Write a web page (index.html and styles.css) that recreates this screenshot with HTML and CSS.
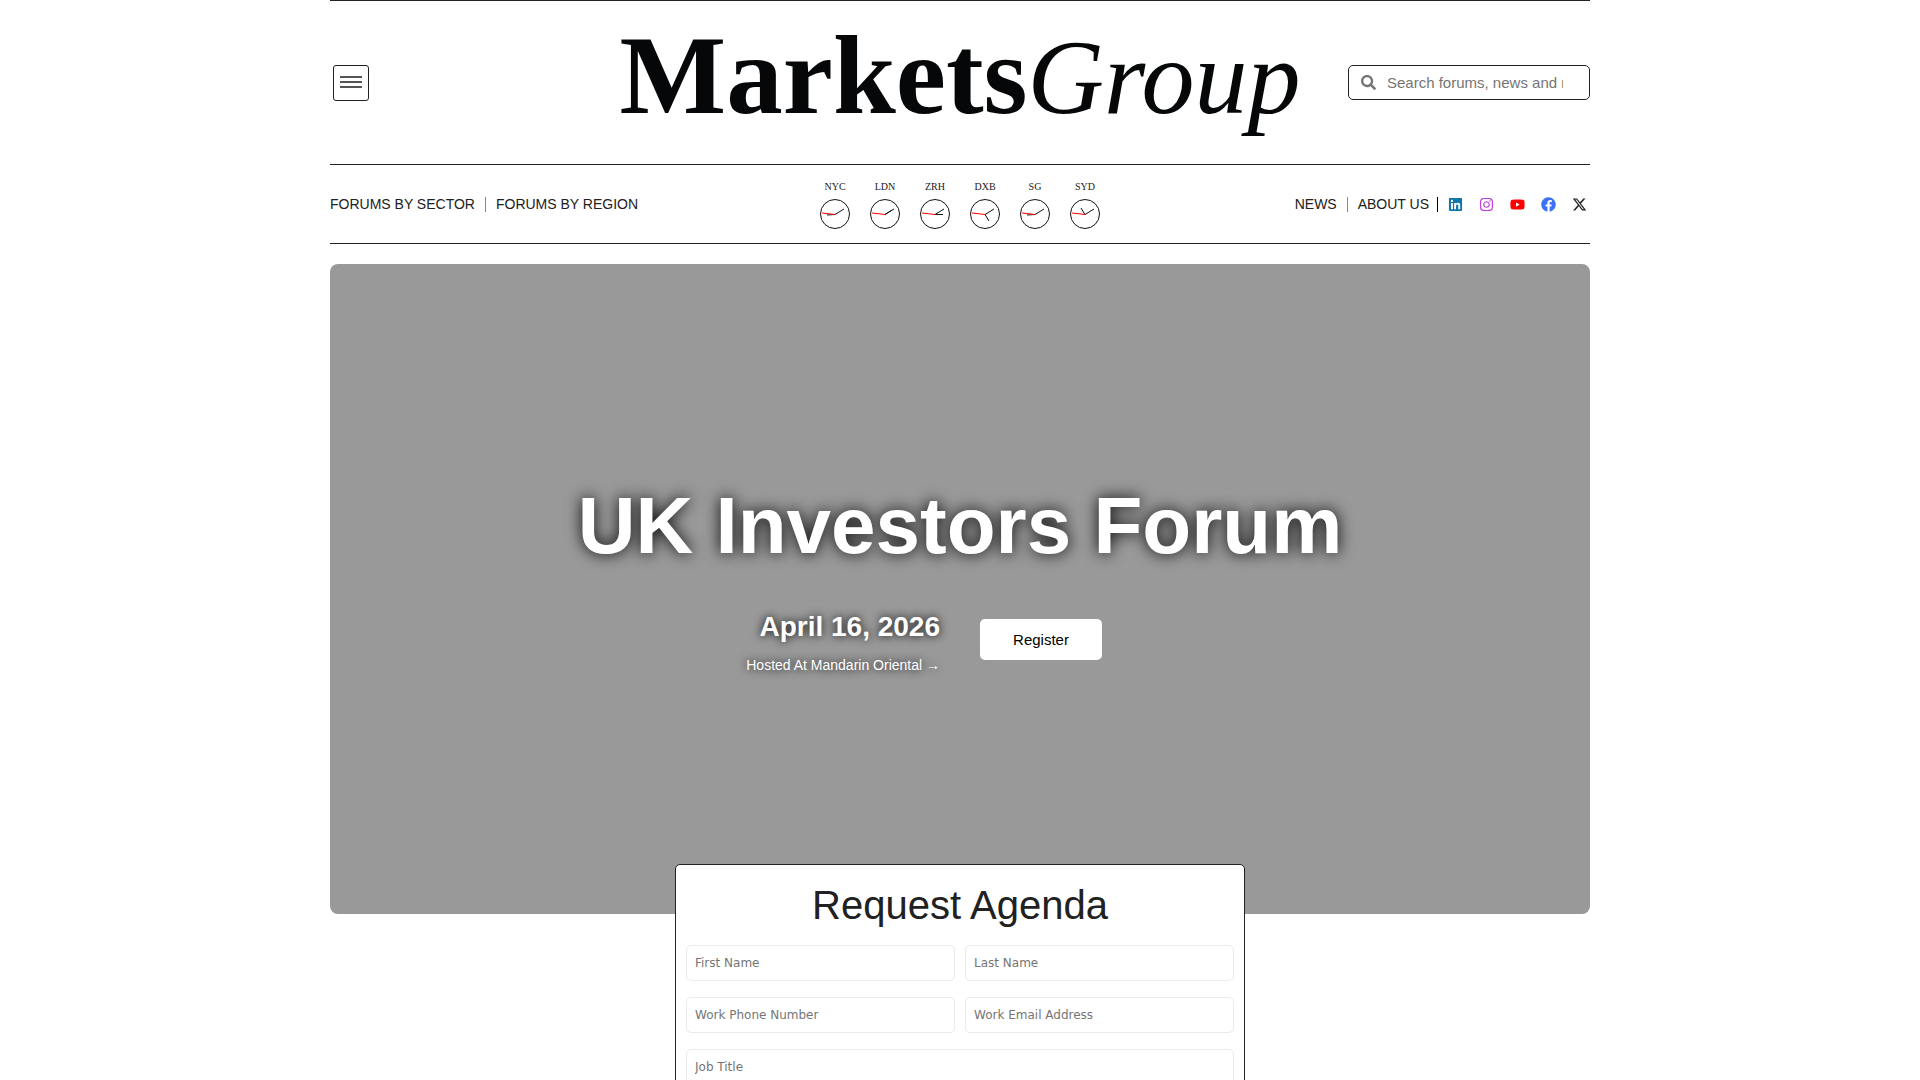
FILE: index.html
```html
<!DOCTYPE html>
<html lang="en">
<head>
<meta charset="utf-8">
<meta name="viewport" content="width=device-width, initial-scale=1">
<title>UK Investors Forum | Markets Group</title>
<link rel="stylesheet" href="styles.css">
</head>
<body>
<div class="page">
  <header class="masthead">
    <button class="menu-button" type="button" aria-label="Open menu">
      <span class="menu-line"></span><span class="menu-line"></span><span class="menu-line"></span>
    </button>
    <a class="logo" href="#"><span class="logo-markets">Markets</span><span class="logo-group">Group</span></a>
    <form class="search" role="search">
      <svg class="search-icon" viewBox="0 0 512 512" aria-hidden="true"><path d="M505 442.7L405.3 343c-4.500-4.500-10.600-7-17-7H372c27.600-35.300 44-79.700 44-128C416 93.100 322.900 0 208 0S0 93.100 0 208s93.100 208 208 208c48.300 0 92.700-16.400 128-44v16.300c0 6.400 2.500 12.500 7 17l99.700 99.700c9.400 9.400 24.600 9.400 33.900 0l28.300-28.300c9.400-9.400 9.400-24.600.1-34zM208 336c-70.700 0-128-57.200-128-128 0-70.700 57.200-128 128-128 70.700 0 128 57.200 128 128 0 70.700-57.200 128-128 128z"/></svg>
      <input class="search-input" type="text" aria-label="Search" placeholder="Search forums, news and more">
    </form>
  </header>

  <nav class="navbar" aria-label="Main">
    <div class="nav-left">
      <a class="nav-link" href="#">FORUMS BY SECTOR</a>
      <span class="divider"></span>
      <a class="nav-link" href="#">FORUMS BY REGION</a>
    </div>
    <div class="clocks">
      <div class="clock"><span>NYC</span><svg class="clock-face" viewBox="0 0 30 30"><circle cx="15" cy="15" r="14.500"/><path class="hour" d="M15 15.500L7 16"/><path class="minute" d="M15 15.500L24 10"/><path class="second" d="M15 15.500L2 14"/></svg></div>
      <div class="clock"><span>LDN</span><svg class="clock-face" viewBox="0 0 30 30"><circle cx="15" cy="15" r="14.500"/><path class="hour" d="M15 15.500L22 11"/><path class="minute" d="M15 15.500L24 10"/><path class="second" d="M15 15.500L2 14"/></svg></div>
      <div class="clock"><span>ZRH</span><svg class="clock-face" viewBox="0 0 30 30"><circle cx="15" cy="15" r="14.500"/><path class="hour" d="M15 15.500L23 15.500"/><path class="minute" d="M15 15.500L24 10"/><path class="second" d="M15 15.500L2 14"/></svg></div>
      <div class="clock"><span>DXB</span><svg class="clock-face" viewBox="0 0 30 30"><circle cx="15" cy="15" r="14.500"/><path class="hour" d="M15 15.500L19 22"/><path class="minute" d="M15 15.500L24 10"/><path class="second" d="M15 15.500L2 14"/></svg></div>
      <div class="clock"><span>SG</span><svg class="clock-face" viewBox="0 0 30 30"><circle cx="15" cy="15" r="14.500"/><path class="hour" d="M15 15.500L7 16"/><path class="minute" d="M15 15.500L24 10"/><path class="second" d="M15 15.500L2 14"/></svg></div>
      <div class="clock"><span>SYD</span><svg class="clock-face" viewBox="0 0 30 30"><circle cx="15" cy="15" r="14.500"/><path class="hour" d="M15 15.500L11 9"/><path class="minute" d="M15 15.500L24 10"/><path class="second" d="M15 15.500L2 14"/></svg></div>
    </div>
    <div class="nav-right">
      <a class="nav-link" href="#">NEWS</a>
      <span class="divider"></span>
      <a class="nav-link" href="#">ABOUT US</a>
      <span class="divider divider-dark"></span>
      <div class="socials">
        <a class="social linkedin" href="#" aria-label="LinkedIn"><svg viewBox="0 0 448 512"><path d="M416 32H31.900C14.300 32 0 46.500 0 64.300v383.400C0 465.500 14.300 480 31.900 480H416c17.600 0 32-14.500 32-32.300V64.300c0-17.800-14.400-32.300-32-32.300zM135.400 416H69V202.200h66.500V416zm-33.200-243c-21.300 0-38.500-17.300-38.500-38.500S80.900 96 102.200 96c21.200 0 38.500 17.300 38.500 38.500 0 21.300-17.200 38.500-38.500 38.500zm282.100 243h-66.400V312c0-24.800-.5-56.700-34.500-56.700-34.600 0-39.900 27-39.900 54.900V416h-66.400V202.200h63.700v29.200h.9c8.900-16.800 30.600-34.500 62.900-34.500 67.200 0 79.700 44.300 79.700 101.900V416z"/></svg></a>
        <a class="social instagram" href="#" aria-label="Instagram"><svg viewBox="0 0 448 512"><path d="M224.100 141c-63.600 0-114.900 51.300-114.900 114.900s51.300 114.900 114.900 114.900S339 319.500 339 255.900 287.700 141 224.100 141zm0 189.600c-41.100 0-74.700-33.500-74.700-74.700s33.500-74.700 74.700-74.700 74.700 33.500 74.700 74.700-33.600 74.700-74.700 74.700zm146.400-194.300c0 14.900-12 26.800-26.800 26.800-14.900 0-26.800-12-26.800-26.800s12-26.800 26.800-26.800 26.800 12 26.800 26.800zm76.100 27.200c-1.700-35.900-9.900-67.700-36.200-93.900-26.200-26.200-58-34.400-93.900-36.200-37-2.100-147.900-2.100-184.900 0-35.800 1.700-67.600 9.900-93.900 36.100s-34.400 58-36.200 93.900c-2.100 37-2.100 147.900 0 184.900 1.700 35.900 9.900 67.700 36.200 93.900s58 34.400 93.900 36.200c37 2.100 147.900 2.100 184.900 0 35.900-1.700 67.700-9.900 93.900-36.200 26.200-26.200 34.400-58 36.200-93.900 2.100-37 2.100-147.800 0-184.800zM398.800 388c-7.800 19.600-22.900 34.700-42.600 42.600-29.500 11.700-99.500 9-132.100 9s-102.700 2.600-132.100-9c-19.600-7.800-34.700-22.900-42.600-42.600-11.700-29.500-9-99.500-9-132.100s-2.600-102.700 9-132.100c7.800-19.600 22.900-34.700 42.600-42.600 29.500-11.700 99.500-9 132.100-9s102.700-2.600 132.100 9c19.600 7.800 34.700 22.900 42.600 42.600 11.700 29.500 9 99.500 9 132.100s2.700 102.700-9 132.100z"/></svg></a>
        <a class="social youtube" href="#" aria-label="YouTube"><svg viewBox="0 0 576 512"><path d="M549.700 124.100c-6.300-23.700-24.800-42.300-48.300-48.600C458.800 64 288 64 288 64S117.200 64 74.600 75.500c-23.500 6.300-42 24.900-48.300 48.600-11.400 42.900-11.400 132.300-11.400 132.300s0 89.400 11.400 132.300c6.300 23.700 24.800 41.500 48.300 47.800C117.200 448 288 448 288 448s170.800 0 213.400-11.500c23.500-6.300 42-24.200 48.300-47.800 11.400-42.900 11.400-132.300 11.400-132.300s0-89.400-11.400-132.300zM232.100 337.600V175.200l142.700 81.200-142.700 81.200z"/></svg></a>
        <a class="social facebook" href="#" aria-label="Facebook"><svg viewBox="0 0 512 512"><path d="M504 256C504 119 393 8 256 8S8 119 8 256c0 123.800 90.700 226.400 209.300 245V327.700h-63V256h63v-54.600c0-62.200 37-96.500 93.700-96.500 27.100 0 55.500 4.800 55.500 4.800v61h-31.300c-30.800 0-40.400 19.100-40.400 38.700V256h68.800l-11 71.700h-57.800V501C413.300 482.400 504 379.800 504 256z"/></svg></a>
        <a class="social x" href="#" aria-label="X"><svg viewBox="0 0 512 512"><path d="M389.200 48h70.600L305.600 224.200 487 464H345L233.700 318.600 106.500 464H35.800L200.700 275.500 26.800 48H172.400L272.900 180.900 389.200 48zM364.400 421.800h39.100L151.100 88h-42L364.400 421.800z"/></svg></a>
      </div>
    </div>
  </nav>

  <main>
    <section class="hero">
      <h1 class="hero-title">UK Investors Forum</h1>
      <div class="hero-row">
        <div class="hero-details">
          <p class="hero-date">April 16, 2026</p>
          <a class="hero-venue" href="#">Hosted At Mandarin Oriental →</a>
        </div>
        <div class="hero-action"><button class="register" type="button">Register</button></div>
      </div>
    </section>

    <form class="agenda">
      <h2 class="agenda-title">Request Agenda</h2>
      <div class="agenda-fields">
        <input class="field" type="text" aria-label="First Name" placeholder="First Name">
        <input class="field" type="text" aria-label="Last Name" placeholder="Last Name">
        <input class="field" type="tel" aria-label="Work Phone Number" placeholder="Work Phone Number">
        <input class="field" type="email" aria-label="Work Email Address" placeholder="Work Email Address">
        <input class="field field-wide" type="text" aria-label="Job Title" placeholder="Job Title">
      </div>
    </form>
  </main>
</div>
</body>
</html>
```

FILE: styles.css
```css
* {
  box-sizing: border-box;
}

body {
  margin: 0;
  background: #fff;
  color: #212121;
  font-family: "Liberation Sans", Arial, sans-serif;
  font-size: 14px;
}

a {
  color: inherit;
  text-decoration: none;
}

.page {
  max-width: 1260px;
  margin: 0 auto;
}

/* Masthead */
.masthead {
  display: grid;
  grid-template-columns: 1fr auto 1fr;
  align-items: center;
  min-height: 165px;
  border-top: 1px solid #212121;
  border-bottom: 1px solid #212121;
}

.menu-button {
  display: flex;
  flex-direction: column;
  align-items: center;
  justify-content: center;
  gap: 3px;
  width: 36px;
  height: 36px;
  margin-left: 3px;
  padding: 0 0 2px;
  border: 1px solid #212121;
  border-radius: 3px;
  background: #fff;
}

.menu-line {
  width: 22px;
  height: 2px;
  background: #555;
}

.logo {
  display: flex;
  align-items: baseline;
  padding-bottom: 12px;
  color: #050708;
  font-family: "Liberation Serif", "Times New Roman", serif;
  line-height: 120px;
  white-space: nowrap;
}

.logo-markets {
  font-size: 113px;
  font-weight: 700;
}

.logo-group {
  font-size: 106px;
  font-style: italic;
}

.search {
  display: flex;
  align-items: center;
  justify-self: end;
  gap: 11px;
  width: 242px;
  height: 35px;
  padding: 0 26px 0 12px;
  border: 1px solid #212121;
  border-radius: 5px;
}

.search-icon {
  flex: none;
  width: 15px;
  height: 15px;
  fill: #757575;
}

.search-input {
  flex: 1;
  min-width: 0;
  padding: 0;
  border: 0;
  background: none;
  font-family: inherit;
  font-size: 15px;
}

/* Navigation */
.navbar {
  display: grid;
  grid-template-columns: 1fr auto 1fr;
  align-items: center;
  min-height: 79px;
  margin-bottom: 20px;
  border-bottom: 1px solid #212121;
}

.nav-left,
.nav-right {
  display: flex;
  align-items: center;
}

.nav-right {
  justify-content: flex-end;
}

.divider {
  width: 1px;
  height: 15px;
  margin: 0 10px;
  background: #888;
}

.divider-dark {
  margin: 0 10px 0 8px;
  background: #000;
}

.clocks {
  display: flex;
  padding-top: 2px;
}

.clock {
  display: flex;
  flex-direction: column;
  align-items: center;
  gap: 6px;
  width: 50px;
  font-family: "Liberation Serif", "Times New Roman", serif;
  font-size: 10px;
  line-height: 12px;
}

.clock-face {
  width: 30px;
  height: 30px;
  fill: none;
  stroke: #111;
}

.second {
  stroke: #f00;
}

.socials {
  display: flex;
  gap: 16px;
  padding-right: 3px;
}

.social {
  display: flex;
  justify-content: center;
  width: 15px;
  height: 15px;
}

.social svg {
  height: 15px;
  width: 100%;
  fill: currentColor;
}

.linkedin {
  color: #0e76a8;
}

.instagram {
  color: #c13de0;
}

.youtube {
  color: #f00;
}

.facebook {
  color: #3b71f7;
}

/* Hero */
.hero {
  display: flex;
  flex-direction: column;
  align-items: center;
  justify-content: center;
  min-height: 650px;
  padding-bottom: 25px;
  border-radius: 8px;
  background: #999;
  color: #fff;
}

.hero-title {
  margin: 0 0 39px;
  font-size: 80px;
  line-height: 92px;
  text-shadow: 0 0 16px #000;
}

.hero-row {
  display: grid;
  grid-template-columns: 1fr 1fr;
  align-items: start;
  gap: 40px;
  align-self: stretch;
}

.hero-details {
  text-align: right;
  text-shadow: 0 0 10px #000;
}

.hero-date {
  margin: 0 0 14px;
  font-size: 28px;
  font-weight: 700;
  line-height: 32px;
}

.hero-venue {
  line-height: 16px;
}

.hero-action {
  padding-top: 8px;
}

.register {
  width: 122px;
  height: 41px;
  border: 0;
  border-radius: 5px;
  background: #fff;
  color: #000;
  font-family: inherit;
  font-size: 15px;
}

/* Agenda request card, overlapping the foot of the hero */
.agenda {
  max-width: 570px;
  margin: -50px auto 0;
  padding: 16px 10px 20px;
  border: 1px solid #212121;
  border-radius: 5px;
  background: #fff;
}

.agenda-title {
  margin: 0 0 16px;
  font-size: 40px;
  font-weight: 400;
  line-height: 48px;
  text-align: center;
}

.agenda-fields {
  display: grid;
  grid-template-columns: 1fr 1fr;
  gap: 16px 10px;
}

.field {
  min-width: 0;
  height: 36px;
  padding: 0 8px;
  border: 1px solid #eaeaea;
  border-radius: 5px;
  background: #fff;
  font-family: "DejaVu Sans", sans-serif;
  font-size: 12px;
}

.field-wide {
  grid-column: 1 / -1;
}
```
